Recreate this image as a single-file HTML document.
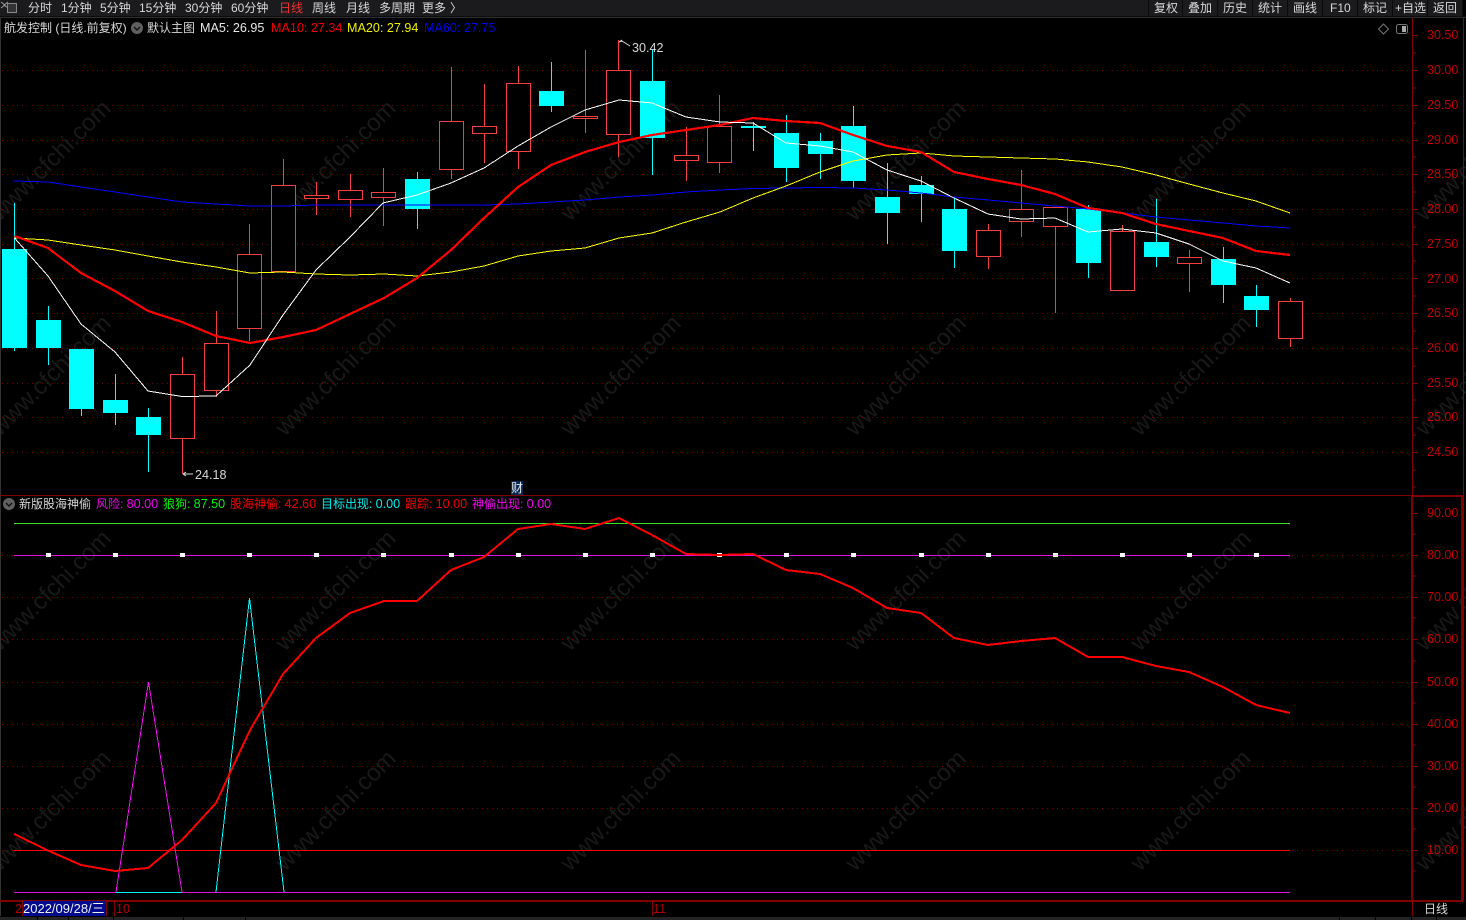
<!DOCTYPE html>
<html><head><meta charset="utf-8"><style>
html,body{margin:0;padding:0;background:#000;width:1466px;height:920px;overflow:hidden}
svg{display:block}
text{font-family:"Liberation Sans","Noto Sans CJK SC",sans-serif;white-space:pre}
.t{font-size:12px;fill:#d8d8d8}
.h{font-size:12.6px}
.y{font-size:12.5px;fill:#c00000}
.w{font-size:24px;fill:#191919}
.g{stroke:#7a0000;stroke-width:1;stroke-dasharray:1 4;fill:none}
.r{fill:#000;stroke:#f33f3f;stroke-width:1}
.c{fill:#0ff}
</style></head><body>
<svg width="1466" height="920" viewBox="0 0 1466 920" xmlns="http://www.w3.org/2000/svg">
<rect width="1466" height="920" fill="#000"/>
<g class="w">
<text class="w" transform="translate(0,222) rotate(-45)">www.cfchi.com</text><text class="w" transform="translate(285,222) rotate(-45)">www.cfchi.com</text><text class="w" transform="translate(570,222) rotate(-45)">www.cfchi.com</text><text class="w" transform="translate(855,222) rotate(-45)">www.cfchi.com</text><text class="w" transform="translate(1140,222) rotate(-45)">www.cfchi.com</text><text class="w" transform="translate(1425,222) rotate(-45)">www.cfchi.com</text>
<text class="w" transform="translate(0,437) rotate(-45)">www.cfchi.com</text><text class="w" transform="translate(285,437) rotate(-45)">www.cfchi.com</text><text class="w" transform="translate(570,437) rotate(-45)">www.cfchi.com</text><text class="w" transform="translate(855,437) rotate(-45)">www.cfchi.com</text><text class="w" transform="translate(1140,437) rotate(-45)">www.cfchi.com</text><text class="w" transform="translate(1425,437) rotate(-45)">www.cfchi.com</text>
<text class="w" transform="translate(0,652) rotate(-45)">www.cfchi.com</text><text class="w" transform="translate(285,652) rotate(-45)">www.cfchi.com</text><text class="w" transform="translate(570,652) rotate(-45)">www.cfchi.com</text><text class="w" transform="translate(855,652) rotate(-45)">www.cfchi.com</text><text class="w" transform="translate(1140,652) rotate(-45)">www.cfchi.com</text><text class="w" transform="translate(1425,652) rotate(-45)">www.cfchi.com</text>
<text class="w" transform="translate(0,872) rotate(-45)">www.cfchi.com</text><text class="w" transform="translate(285,872) rotate(-45)">www.cfchi.com</text><text class="w" transform="translate(570,872) rotate(-45)">www.cfchi.com</text><text class="w" transform="translate(855,872) rotate(-45)">www.cfchi.com</text><text class="w" transform="translate(1140,872) rotate(-45)">www.cfchi.com</text><text class="w" transform="translate(1425,872) rotate(-45)">www.cfchi.com</text>
</g>
<!-- toolbar -->
<rect x="0" y="0" width="1466" height="16" fill="#1b1b1d"/>
<rect x="0" y="16" width="1466" height="1" fill="#0d0d0d"/>
<rect x="0" y="17" width="1466" height="1" fill="#2e2e2e"/>
<path d="M1148.5 0V16M1182.5 0V16M1217.5 0V16M1252.5 0V16M1287.5 0V16M1322.5 0V16M1357.5 0V16M1392.5 0V16M1427.5 0V16M1462.5 0V16" stroke="#0b0b0b" fill="none"/>
<rect x="1463" y="0" width="3" height="16" fill="#000"/>
<path d="M1 2L5 5L1 8M8 2L4 5L8 8" stroke="#999" fill="none"/>
<rect x="7.5" y="3.5" width="9" height="9" fill="#333" stroke="#888"/>
<g class="t">
<text x="28" y="12">分时</text><text x="61" y="12">1分钟</text><text x="100" y="12">5分钟</text><text x="139" y="12">15分钟</text><text x="185" y="12">30分钟</text><text x="231" y="12">60分钟</text><text x="279" y="12" style="fill:#f03030">日线</text><text x="312" y="12">周线</text><text x="346" y="12">月线</text><text x="379" y="12">多周期</text><text x="422" y="12">更多</text><text x="450" y="12">〉</text>
<text x="1154" y="12">复权</text><text x="1188" y="12">叠加</text><text x="1223" y="12">历史</text><text x="1258" y="12">统计</text><text x="1293" y="12">画线</text><text x="1330" y="12">F10</text><text x="1363" y="12">标记</text><text x="1395" y="12">+自选</text><text x="1433" y="12">返回</text>
</g>
<!-- frame -->
<rect x="0" y="18" width="1" height="898" fill="#333"/>
<rect x="1463" y="18" width="1" height="882" fill="#2a2a2a"/>
<!-- grid -->
<path class="g" d="M2 70.5H1412M2 105.5H1412M2 140.5H1412M2 174.5H1412M2 209.5H1412M2 244.5H1412M2 278.5H1412M2 313.5H1412M2 348.5H1412M2 383.5H1412M2 417.5H1412M2 452.5H1412"/>
<path class="g" d="M2 555.5H1412M2 597.5H1412M2 639.5H1412M2 682.5H1412M2 724.5H1412M2 766.5H1412M2 808.5H1412M2 850.5H1412"/>
<!-- axes -->
<rect x="1412" y="18" width="1" height="477" fill="#800000"/>
<rect x="0" y="495" width="1412" height="1" fill="#800000"/>
<rect x="1411" y="495" width="52" height="2" fill="#800000"/>
<rect x="1411" y="495" width="2" height="406" fill="#800000"/>
<rect x="1461" y="495" width="2" height="406" fill="#800000"/>
<rect x="0" y="900" width="1463" height="2" fill="#800000"/>
<path d="M1413 35.5h5M1413 53h3M1413 70.5h5M1413 88h3M1413 105.5h5M1413 123h3M1413 140.5h5M1413 157h3M1413 174.5h5M1413 192h3M1413 209.5h5M1413 227h3M1413 244.5h5M1413 261h3M1413 278.5h5M1413 296h3M1413 313.5h5M1413 331h3M1413 348.5h5M1413 366h3M1413 383.5h5M1413 400h3M1413 417.5h5M1413 435h3M1413 452.5h5M1413 470h3M1413 487h3M1413 513.5h5M1413 534h3M1413 555.5h5M1413 576h3M1413 597.5h5M1413 618h3M1413 639.5h5M1413 661h3M1413 682.5h5M1413 703h3M1413 724.5h5M1413 745h3M1413 766.5h5M1413 787h3M1413 808.5h5M1413 829h3M1413 850.5h5M1413 871h3" stroke="#800000" fill="none"/>
<g class="y">
<text x="1427" y="39">30.50</text><text x="1427" y="74">30.00</text><text x="1427" y="109">29.50</text><text x="1427" y="144">29.00</text><text x="1427" y="178">28.50</text><text x="1427" y="213">28.00</text><text x="1427" y="248">27.50</text><text x="1427" y="283">27.00</text><text x="1427" y="317">26.50</text><text x="1427" y="352">26.00</text><text x="1427" y="387">25.50</text><text x="1427" y="421">25.00</text><text x="1427" y="456">24.50</text>
<text x="1427" y="517">90.00</text><text x="1427" y="559">80.00</text><text x="1427" y="601">70.00</text><text x="1427" y="643">60.00</text><text x="1427" y="686">50.00</text><text x="1427" y="728">40.00</text><text x="1427" y="770">30.00</text><text x="1427" y="812">20.00</text><text x="1427" y="854">10.00</text>
</g>
<!-- cyan wicks -->
<path shape-rendering="crispEdges" fill="none" stroke="#0ff" d="M14.5 203V351M48.5 306V365M81.5 349V416M115.5 374V425M148.5 408V472M417.5 172V229M551.5 62V112M652.5 50V175M753.5 122V151M786.5 115V182M820.5 133V179M853.5 106V188M887.5 163V244M921.5 176V222M954.5 197V268M1088.5 205V278M1156.5 199V267M1223.5 247V303M1256.5 285V327"/>
<!-- cyan bodies -->
<g class="c" shape-rendering="crispEdges">
<rect x="2" y="249" width="25" height="99"/><rect x="36" y="320" width="25" height="28"/><rect x="69" y="349" width="25" height="60"/><rect x="103" y="400" width="25" height="13"/><rect x="136" y="417" width="25" height="18"/><rect x="405" y="179" width="25" height="30"/><rect x="539" y="91" width="25" height="15"/><rect x="640" y="81" width="25" height="57"/><rect x="741" y="126" width="25" height="2"/><rect x="774" y="133" width="25" height="35"/><rect x="808" y="141" width="25" height="13"/><rect x="841" y="126" width="25" height="55"/><rect x="875" y="197" width="25" height="16"/><rect x="909" y="185" width="25" height="9"/><rect x="942" y="209" width="25" height="42"/><rect x="1076" y="209" width="25" height="54"/><rect x="1144" y="242" width="25" height="15"/><rect x="1211" y="259" width="25" height="26"/><rect x="1244" y="296" width="25" height="14"/>
</g>
<!-- red wicks -->
<path shape-rendering="crispEdges" fill="none" stroke="#f33f3f" d="M182.5 357V474M216.5 311V397M249.5 224V341M283.5 159V271M316.5 182V215M350.5 174V217M383.5 168V226M451.5 67V179M484.5 84V163M518.5 66V169M585.5 50V133M618.5 40V157M686.5 127V181M719.5 95V173M988.5 224V269M1021.5 170V237M1055.5 207V313M1122.5 225V291M1189.5 250V292M1290.5 298V347"/>
<!-- red bodies -->
<g class="r" shape-rendering="crispEdges">
<rect x="170.5" y="374.5" width="24" height="64"/><rect x="204.5" y="343.5" width="24" height="47"/><rect x="237.5" y="254.5" width="24" height="74"/><rect x="271.5" y="185.5" width="24" height="86"/><rect x="304.5" y="195.5" width="24" height="3"/><rect x="338.5" y="190.5" width="24" height="9"/><rect x="371.5" y="192.5" width="24" height="5"/><rect x="439.5" y="121.5" width="24" height="48"/><rect x="472.5" y="126.5" width="24" height="7"/><rect x="506.5" y="83.5" width="24" height="68"/><rect x="573.5" y="116.5" width="24" height="2"/><rect x="606.5" y="70.5" width="24" height="64"/><rect x="674.5" y="155.5" width="24" height="5"/><rect x="707.5" y="126.5" width="24" height="36"/><rect x="976.5" y="230.5" width="24" height="26"/><rect x="1009.5" y="209.5" width="24" height="12"/><rect x="1043.5" y="207.5" width="24" height="19"/><rect x="1110.5" y="231.5" width="24" height="59"/><rect x="1177.5" y="257.5" width="24" height="6"/><rect x="1278.5" y="301.5" width="24" height="37"/>
</g>
<!-- MAs -->
<g shape-rendering="crispEdges">
<polyline fill="none" stroke="#0000ff" stroke-width="1" points="14,181 48,182 81,187 115,192 148,197 182,202 216,204 250,206 283,206 316,205 383,205 451,205 484,205 518,204 551,202 585,200 619,197 652,195 686,192 720,190 753,188.5 786,188 820,187.5 853,188 887,190 921,193 954,197 988,200 1021,203 1055,206 1088,209 1122,213 1156,217 1189,220 1223,223 1256,226 1290,228"/>
<polyline fill="none" stroke="#ffff00" stroke-width="1" points="14.5,238 48,240 81,245 115,250 148,256 182,262 216,267 250,273 283,272 316,274 350,275 384,274 417,276 451,272 484,266 518,256 551,251 585,248 619,238 652,233 686,222 720,212 753,198 786,186 820,172 853,161 887,155 921,153 954,156 988,157 1021,158 1055,159 1088,162 1122,167 1156,175 1189,184 1223,193 1256,201 1290,213"/>
<polyline fill="none" stroke="#f00" stroke-width="2.2" points="14.5,236 48,248 81,273 115,291 148,311 182,322 216,336 250,343 283,337 316,330 350,314 384,298 417,278 451,250 484,218 518,187 551,165 585,152 619,142 652,135 686,130 720,125 753,118 786,121 820,123 853,135 887,146 921,152 954,172 988,179 1021,185 1055,194 1088,208 1122,213 1156,224 1189,231 1223,238 1256,251 1290,255"/>
<polyline fill="none" stroke="#fff" stroke-width="1" points="14.5,238 48,276 81,324 115,352 148,391 182,396.5 216,396 250,365 283,315 316,270 350,237 383,203 417,195 451,183 484,168 518,146 551,127 585,110 619,100 652,103 686,117 720,122 753,123 786,143 820,146 853,152 887,170 921,181 954,198 988,214 1021,219 1055,218 1088,232 1122,229 1156,233 1189,244 1223,261 1256,268 1290,283"/>
</g>
<!-- high low -->
<path d="M619 42L622 41L630 46M619 42l3-2M183 474H193M183 474l3-2M183 474l3 2" stroke="#ddd" fill="none"/>
<text x="632" y="52" class="h" style="fill:#d8d8d8">30.42</text>
<text x="195" y="479" class="h" style="fill:#d8d8d8">24.18</text>
<!-- header main -->
<text x="4" y="32" class="t">航发控制 (日线.前复权)</text>
<circle cx="137" cy="28" r="6" fill="#606060"/><path d="M134 27l3 3 3-3" stroke="#111" stroke-width="1.4" fill="none"/>
<text x="147" y="32" class="t">默认主图</text>
<text x="200" y="32" class="h" style="fill:#e8e8e8">MA5: 26.95</text>
<text x="271" y="32" class="h" style="fill:#f00000">MA10: 27.34</text>
<text x="347" y="32" class="h" style="fill:#f0f000">MA20: 27.94</text>
<text x="424" y="32" class="h" style="fill:#0000f0">MA60: 27.75</text>
<path d="M1383.5 24l5 5-5 5-5-5z" fill="none" stroke="#777"/>
<rect x="1396.5" y="24.5" width="11" height="9" rx="2" fill="none" stroke="#777"/><rect x="1402" y="26" width="4" height="6" fill="#aaa"/>
<!-- 财 -->
<rect x="511" y="481" width="12" height="14" fill="#0a2a55"/>
<text x="511" y="492" class="t" style="fill:#e8e8e8">财</text>
<!-- lower header -->
<circle cx="9" cy="504" r="6" fill="#606060"/><path d="M6 503l3 3 3-3" stroke="#111" stroke-width="1.4" fill="none"/>
<text x="19" y="508" class="t">新版股海神偷</text>
<text x="96" y="508" class="t" style="fill:#f000f0">风险: <tspan class="h">80.00</tspan></text>
<text x="163" y="508" class="t" style="fill:#00f000">狼狗: <tspan class="h">87.50</tspan></text>
<text x="230" y="508" class="t" style="fill:#f00000">股海神偷: <tspan class="h">42.60</tspan></text>
<text x="321" y="508" class="t" style="fill:#00f0f0">目标出现: <tspan class="h">0.00</tspan></text>
<text x="405" y="508" class="t" style="fill:#f00000">跟踪: <tspan class="h">10.00</tspan></text>
<text x="472" y="508" class="t" style="fill:#f000f0">神偷出现: <tspan class="h">0.00</tspan></text>
<!-- lower lines -->
<rect x="14" y="523" width="1276" height="1" fill="#33e022"/>
<rect x="14" y="555" width="1276" height="1" fill="#e010e0"/>
<path fill="#fff" d="M46 553h5v4h-5zM113 553h5v4h-5zM180 553h5v4h-5zM247 553h5v4h-5zM314 553h5v4h-5zM381 553h5v4h-5zM449 553h5v4h-5zM516 553h5v4h-5zM583 553h5v4h-5zM650 553h5v4h-5zM717 553h5v4h-5zM784 553h5v4h-5zM851 553h5v4h-5zM919 553h5v4h-5zM986 553h5v4h-5zM1053 553h5v4h-5zM1120 553h5v4h-5zM1187 553h5v4h-5zM1254 553h5v4h-5z"/>
<rect x="14" y="850" width="1276" height="1" fill="#f00"/>
<rect x="14" y="892" width="1276" height="1" fill="#e010e0"/>
<rect x="116" y="892" width="66" height="1" fill="#0ee"/>
<g shape-rendering="crispEdges">
<polyline fill="none" stroke="#f010f0" points="116,892 148.5,682 182,892"/>
<polyline fill="none" stroke="#0ff" points="216,892 249.5,598 284,892"/>
<polyline fill="none" stroke="#f00" stroke-width="2" points="14,834 49,851 81,865 115,871 148,868 182,840 216,803 250,730 283,674 316,638 350,613 384,601 417,601 451,570 484,557 518,529 551,524 585,529 619,518 652,535 686,554 720,555 753,554 786,570 820,574 853,588 887,608 921,613 954,638 988,645 1021,641 1055,638 1088,657 1122,657 1156,666 1189,672 1223,687 1256,705 1290,713"/>
</g>
<!-- bottom -->
<rect x="23" y="901" width="83" height="15" fill="#000a8c"/>
<path d="M22.5 901V916M106.5 901V916M114.5 901V916M652.5 901V916M1412.5 901V916" stroke="#800000" fill="none"/>
<text x="15" y="913" class="h" style="fill:#b40000">2</text>
<text x="23" y="913" style="fill:#f0f0f0;font-size:13px">2022/09/28/三</text>
<text x="116" y="913" class="h" style="fill:#b40000">10</text>
<text x="653" y="913" class="h" style="fill:#b40000">11</text>
<text x="1424" y="913" class="t">日线</text>
<rect x="0" y="917" width="1466" height="3" fill="#242426"/>
<path d="M37.5 917V920M68.5 917V920M113.5 917V920M183.5 917V920M245.5 917V920M1339.5 917V920M1375.5 917V920M1411.5 917V920M1436.5 917V920" stroke="#000" fill="none"/>
</svg>
</body></html>
